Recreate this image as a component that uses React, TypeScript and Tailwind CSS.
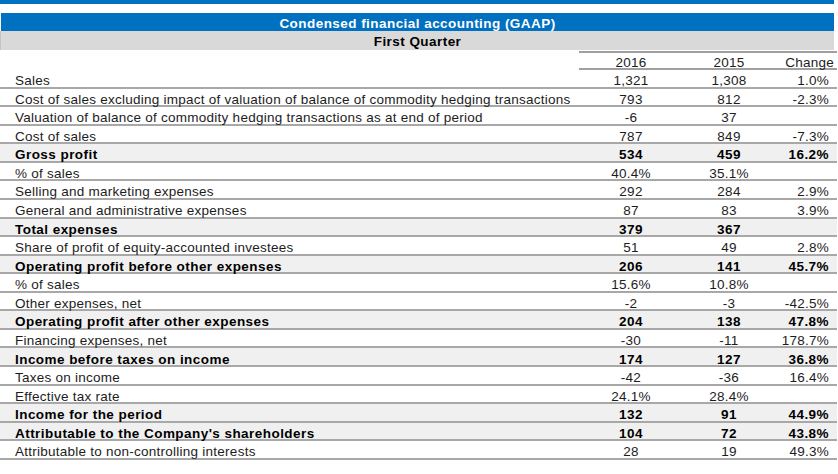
import React from "react";

type Row = { label: string; a: string; b: string; c: string; bold?: boolean };

const rows: Row[] = [
  { label: "Sales", a: "1,321", b: "1,308", c: "1.0%" },
  { label: "Cost of sales excluding impact of valuation of balance of commodity hedging transactions", a: "793", b: "812", c: "-2.3%" },
  { label: "Valuation of balance of commodity hedging transactions as at end of period", a: "-6", b: "37", c: "" },
  { label: "Cost of sales", a: "787", b: "849", c: "-7.3%" },
  { label: "Gross profit", a: "534", b: "459", c: "16.2%", bold: true },
  { label: "% of sales", a: "40.4%", b: "35.1%", c: "" },
  { label: "Selling and marketing expenses", a: "292", b: "284", c: "2.9%" },
  { label: "General and administrative expenses", a: "87", b: "83", c: "3.9%" },
  { label: "Total expenses", a: "379", b: "367", c: "", bold: true },
  { label: "Share of profit of equity-accounted investees", a: "51", b: "49", c: "2.8%" },
  { label: "Operating profit before other expenses", a: "206", b: "141", c: "45.7%", bold: true },
  { label: "% of sales", a: "15.6%", b: "10.8%", c: "" },
  { label: "Other expenses, net", a: "-2", b: "-3", c: "-42.5%" },
  { label: "Operating profit after other expenses", a: "204", b: "138", c: "47.8%", bold: true },
  { label: "Financing expenses, net", a: "-30", b: "-11", c: "178.7%" },
  { label: "Income before taxes on income", a: "174", b: "127", c: "36.8%", bold: true },
  { label: "Taxes on income", a: "-42", b: "-36", c: "16.4%" },
  { label: "Effective tax rate", a: "24.1%", b: "28.4%", c: "" },
  { label: "Income for the period", a: "132", b: "91", c: "44.9%", bold: true },
  { label: "Attributable to the Company's shareholders", a: "104", b: "72", c: "43.8%", bold: true },
  { label: "Attributable to non-controlling interests", a: "28", b: "19", c: "49.3%" },
];

export default function App() {
  return (
    <div
      className="w-[838px] h-[474px] bg-white text-[13.5px] text-[#1c1c1c] overflow-hidden"
      style={{ fontFamily: '"Liberation Sans", Arial, sans-serif' }}
    >
      <div className="w-[834px] h-[4px] bg-[#0070c0]" />
      <div className="h-[9px]" />
      <div className="w-[833px] ml-[1px] h-[18px] bg-[#0070c0] text-white font-bold tracking-[0.45px] flex items-end justify-center leading-[11.5px] pb-[2px]">
        Condensed financial accounting (GAAP)
      </div>
      <div className="w-[834px] h-[19px] bg-[#d9d9d9] border-l border-[#c4c4c4] font-bold tracking-[0.45px] flex items-end justify-center leading-[11.5px] pb-[3px] text-black">
        First Quarter
      </div>
      <div className="h-[1px]" />
      <div className="grid grid-cols-[579px_104px_92px_62px] h-[19px]">
        <div />
        <div className="col-span-3 border-y-2 border-[#a0a0a0] grid grid-cols-[104px_92px_62px] leading-[11.5px] items-end tracking-[0.25px]">
          <div className="text-center">2016</div>
          <div className="text-center">2015</div>
          <div className="text-right pr-[3px]">Change</div>
        </div>
      </div>
      {rows.map((r, i) => (
        <div
          key={i}
          className={
            "grid grid-cols-[579px_104px_92px_62px] w-[837px] h-[18.57px] border-b-2 border-[#a8a8a8] leading-[11.5px] items-end " +
            (r.bold ? "font-bold bg-[#f0f0f0] text-black tracking-[0.45px]" : "tracking-[0.25px]")
          }
        >
          <div className="pl-[15px] whitespace-nowrap">{r.label}</div>
          <div className="text-center">{r.a}</div>
          <div className="text-center">{r.b}</div>
          <div className="text-right pr-[8px]">{r.c}</div>
        </div>
      ))}
    </div>
  );
}
